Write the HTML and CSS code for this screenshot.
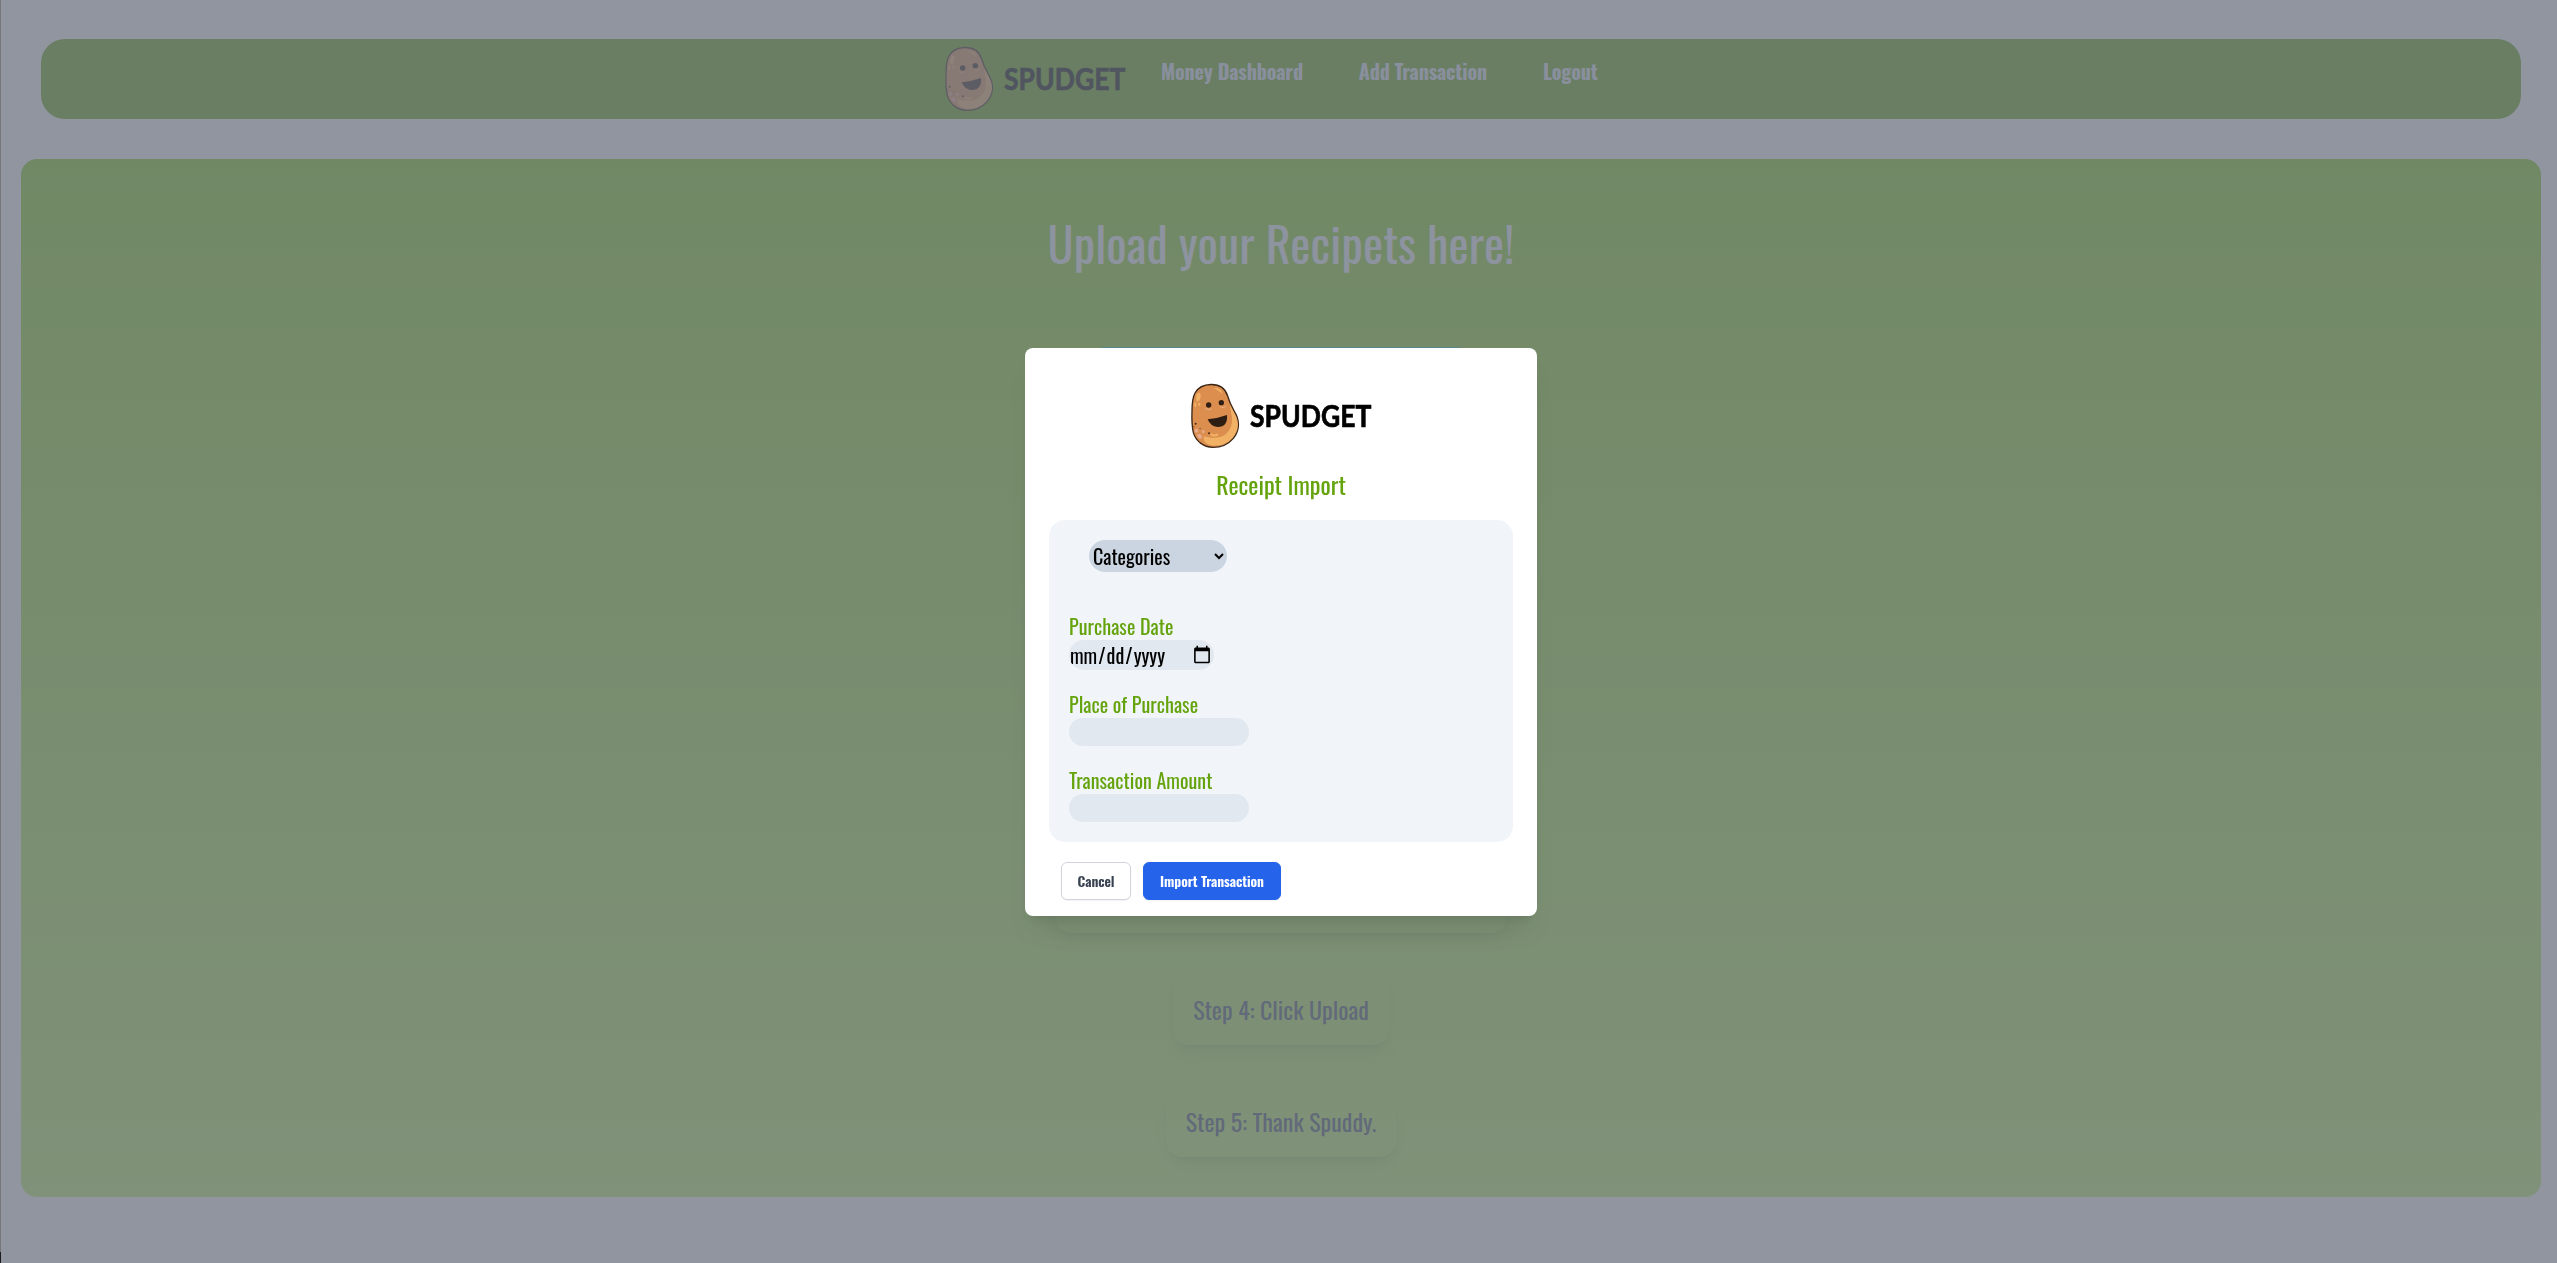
FILE: index.html
```html
<!DOCTYPE html>
<html lang="en-US">
<head>
<meta charset="utf-8">
<title>Spudget</title>
<link rel="stylesheet" href="styles.css">
</head>
<body>
<svg width="0" height="0" class="defs">
  <defs><g id="potato">
    <path d="M213 43.500C238 43 256 55 263 78C270 103 279 116 288 133C300 158 297 185 280 205C264 224 241 232 219 232C190 231 168 214 160 188C155 165 155 148 156 122C156 100 157 84 165 69C174 53 192 44 213 43.500Z" fill="#db8e4d"/>
    <path d="M270 104C277 118 290 136 294 152C298 176 286 200 265 216C242 230 212 230 197 218C190 211 190 202 193 199C216 207 246 205 261 189C277 171 279 152 274 132Z" fill="#f2b266"/>
    <path d="M170 74C175 66 182 67 182 76C182 86 178 94 173 94C168 94 167 82 170 74Z" fill="#f2b266"/>
    <ellipse cx="166" cy="104" rx="3" ry="7" fill="#f2b266"/><ellipse cx="178" cy="103" rx="3.500" ry="5" fill="#f2b266"/>
    <path d="M222 54C236 53 246 60 248 72C242 65 232 61 222 54Z" fill="#f2b266"/>
    <path d="M214 193Q222 199 232 194" fill="none" stroke="#f2b266" stroke-width="6" stroke-linecap="round"/>
    <path d="M196 115Q205 123 214 116M240 110Q250 116 258 109" fill="none" stroke="#edae88" stroke-width="3"/>
    <circle cx="206" cy="105" r="8" fill="#2e1d12"/><circle cx="244" cy="98" r="8" fill="#2e1d12"/>
    <path d="M203 148Q234 145 261 135Q264 171 233 171Q211 169 203 148Z" fill="#2e1d12"/>
    <g fill="#e6ac91"><circle cx="169" cy="182" r="5.500"/><ellipse cx="179" cy="199" rx="8" ry="6" transform="rotate(40 179 199)"/><circle cx="190" cy="185" r="4"/><circle cx="179" cy="175" r="2.500"/></g>
    <g fill="#4a2717"><circle cx="167" cy="161" r="3"/><circle cx="180" cy="175" r="2"/><circle cx="207" cy="190" r="3"/><circle cx="162" cy="170" r="1.500"/></g>
    <path d="M213 43.500C238 43 256 55 263 78C270 103 279 116 288 133C300 158 297 185 280 205C264 224 241 232 219 232C190 231 168 214 160 188C155 165 155 148 156 122C156 100 157 84 165 69C174 53 192 44 213 43.500Z" fill="none" stroke="#3c2717" stroke-width="4"/>
  </g></defs>
</svg>
<div class="app">
  <header class="header">
    <svg class="logo" viewBox="150 39 552 198"><use href="#potato"/><text x="330" y="170" class="wordmark" textLength="364" lengthAdjust="spacingAndGlyphs">SPUDGET</text></svg>
    <nav class="nav"><a>Money Dashboard</a><a>Add Transaction</a><a>Logout</a></nav>
  </header>
  <main class="main">
    <h1>Upload your Recipets here!</h1>
    <div class="uploader"></div>
    <p class="step wide"></p>
    <p class="step">Step 4: Click Upload</p>
    <p class="step">Step 5: Thank Spuddy.</p>
  </main>
</div>
<div class="overlay">
  <section class="modal">
    <svg class="logo" viewBox="150 39 552 198"><use href="#potato"/><text x="330" y="170" class="wordmark" textLength="364" lengthAdjust="spacingAndGlyphs">SPUDGET</text></svg>
    <h2>Receipt Import</h2>
    <form class="panel">
      <select><option>Categories</option></select>
      <label>Purchase Date</label>
      <input class="date" type="date">
      <label>Place of Purchase</label>
      <input type="text">
      <label>Transaction Amount</label>
      <input type="text">
    </form>
    <div class="actions"><button class="cancel">Cancel</button><button class="import">Import Transaction</button></div>
  </section>
</div>
</body>
</html>
```
FILE: styles.css
```css
* { box-sizing: border-box; margin: 0; padding: 0; }
html { height: 100%; overflow: hidden; }
body {
  height: 1263px;
  overflow: hidden;
  padding-left: 1px;
  background: linear-gradient(#777 1252px, #1c1c1c 1252px);
  font-family: Oswald, "Roboto Condensed", "Open Sans", sans-serif;
}
.defs { position: absolute; }
.app { width: 2560px; height: 1263px; padding-top: 39px; background: #fff; }
.logo { display: block; width: 184px; height: 66px; flex: none; }
.wordmark { font: 700 89px Lato, sans-serif; fill: #000; stroke: #000; stroke-width: 2px; }

.header {
  display: flex;
  height: 80px;
  margin: 0 40px 40px;
  padding: 7px 0 0 903px;
  border-radius: 24px;
  background: #65a30d;
}
.nav { display: flex; gap: 56px; margin: 11px 0 0 33px; }
.nav a { font-size: 20px; font-weight: 700; line-height: 28px; letter-spacing: -.12px; color: #e2e8f0; }

.main {
  display: flex;
  flex-direction: column;
  align-items: center;
  height: 1038px;
  margin: 0 20px;
  padding: 60px 0 40px;
  border-radius: 16px;
  background: linear-gradient(#84cc16, #bef264);
}
.main h1 { font-size: 48px; font-weight: 400; line-height: 48px; letter-spacing: .06px; color: #f1f5f9; }
.uploader { width: 382px; height: 160px; margin-top: 80px; border-radius: 16px; background: #22c5a0; }
.step {
  padding: 20px;
  margin-bottom: 40px;
  border-radius: 16px;
  font-size: 24px;
  line-height: 32px;
  color: #475569;
  box-shadow: 0 10px 15px -3px rgb(0 0 0 / .1), 0 4px 6px -4px rgb(0 0 0 / .1);
}
.step:last-child { margin-bottom: 0; }
.step.wide { width: 452px; height: 72px; margin-top: auto; }

.overlay {
  position: fixed;
  inset: 0 -4px 0 1px;
  display: flex;
  justify-content: center;
  align-items: flex-start;
  padding-top: 348px;
  background: rgb(107 114 128 / .75);
}
.modal {
  width: 512px;
  height: 568px;
  padding: 35px 24px 16px;
  border-radius: 8px;
  background: #fff;
  box-shadow: 0 20px 25px -5px rgb(0 0 0 / .07), 0 8px 10px -6px rgb(0 0 0 / .1);
}
.modal .logo { margin: 0 0 0 141px; }
.modal h2 { margin: 19px 0 20px; text-align: center; font-size: 24px; font-weight: 400; line-height: 32px; color: #65a30d; }
.panel {
  display: flex;
  flex-direction: column;
  align-items: flex-start;
  padding: 20px;
  border-radius: 16px;
  background: #f1f5f9;
}
.panel select, .panel input { border: 0; font-family: inherit; font-size: 20px; color: #000; border-radius: 16px; }
.panel select { width: 138px; height: 32px; margin: 0 0 40px 20px; background: #cbd5e1; }
.panel label { font-size: 20px; line-height: 28px; letter-spacing: .05px; color: #65a30d; }
.panel input { width: 180px; height: 28px; margin-bottom: 20px; background: #e2e8f0; }
.panel .date { width: 145px; height: 30px; }
.panel input:last-child { margin-bottom: 0; }
.actions { display: flex; gap: 12px; padding: 20px 12px 0; }
.actions button {
  height: 38px;
  border: 1px solid #d1d5db;
  border-radius: 6px;
  font: 600 14px/20px Oswald, "Roboto Condensed", sans-serif;
  letter-spacing: -.08px;
  color: #374151;
  background: #fff;
  box-shadow: 0 1px 2px rgb(0 0 0 / .05);
}
.actions .cancel { width: 70px; }
.actions .import { width: 138px; border-color: #2563eb; background: #2563eb; color: #fff; }
```
